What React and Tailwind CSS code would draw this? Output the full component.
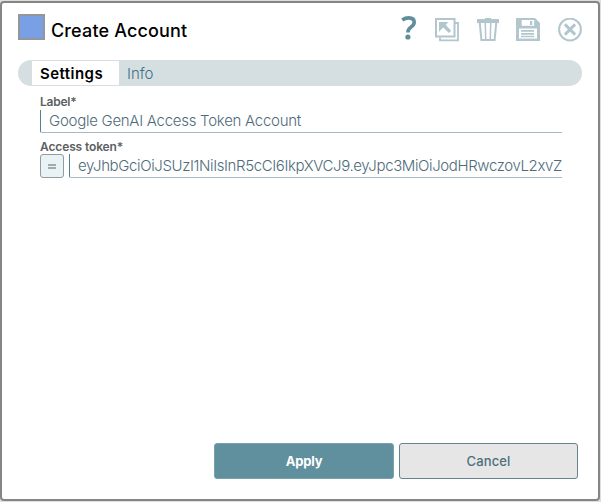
function HelpIcon() {
  return (
    <svg className="h-6 w-4" viewBox="0 0 16 24" fill="none">
      <path d="M1.2 4C3.5 2.4 5.3 1.9 7.8 1.9C11.2 1.9 13.2 3.5 13.2 6.2C13.2 8.4 12 9.7 9.8 11.2C7.7 12.7 6.9 13.5 6.9 16.5" stroke="#608e9c" strokeWidth="3.6" />
      <circle cx="6.9" cy="21" r="2.6" fill="#608e9c" />
    </svg>
  );
}

function PopOutIcon() {
  return (
    <svg className="size-6" viewBox="0 0 24 24" fill="none" stroke="#b2c6ce">
      <path d="M20 5H23V22.3H5V19.5" strokeWidth="1.8" />
      <rect x="1" y="1" width="18.5" height="17.5" strokeWidth="2" />
      <path d="M4 4H13.4L10.8 6.9L16.2 12.7L13.9 15L8.2 9.4L4 13.8Z" fill="#b2c6ce" stroke="none" />
    </svg>
  );
}

function TrashIcon() {
  return (
    <svg className="h-6 w-[22px]" viewBox="0 0 22 24" fill="none" stroke="#b2c6ce">
      <path d="M8 0H14V1H22V5H0V1H8Z" fill="#b2c6ce" stroke="none" />
      <path d="M2.8 5L4.4 22H17.6L19.2 5" strokeWidth="2" />
      <path d="M8.3 5L8.7 22M13.7 5L13.3 22" strokeWidth="1.5" />
    </svg>
  );
}

function SaveIcon() {
  return (
    <svg className="size-6" viewBox="0 0 24 24">
      <path d="M0 0H19L24 5V23H0Z" fill="#b2c6ce" />
      <path d="M5.7 2H18.2V7.8H5.7Z" fill="#fff" />
      <path d="M14 3H16.2V7H14Z" fill="#b2c6ce" />
      <path d="M3 10.5H21V20.6H3Z" fill="#fff" />
      <path d="M5 12H18V13.7H5ZM5 15H18V16.7H5ZM5 17.8H18V19.3H5Z" fill="#b2c6ce" />
    </svg>
  );
}

function CloseIcon() {
  return (
    <svg className="size-6" viewBox="0 0 24 24" fill="none" stroke="#b2c6ce">
      <circle cx="12" cy="11.5" r="10.9" strokeWidth="2" />
      <path d="M6.9 6.4L17.1 16.6M17.1 6.4L6.9 16.6" strokeWidth="2.9" />
    </svg>
  );
}

export default function App() {
  return (
    <div className="flex h-[502px] w-[601px] overflow-hidden bg-[#dedede] pt-px pr-px pb-px font-['Inter',sans-serif]">
      <div className="flex min-w-0 flex-1 flex-col rounded-[4px] border-2 border-[#858585] bg-white">
        <header className="flex h-[57px] items-start pl-4">
          <div className="mt-[11px] h-[26px] w-[27px] border-2 border-[#93979c] bg-[#799fe5]" />
          <h1 className="mt-4 ml-1.5 text-[18px] leading-6 font-medium tracking-[0.15px] whitespace-nowrap text-black">Create Account</h1>
          <div className="mt-[15px] mr-4 ml-auto flex items-start">
            <span className="-mt-0.5"><HelpIcon /></span>
            <span className="ml-[18px]"><PopOutIcon /></span>
            <span className="ml-[18px]"><TrashIcon /></span>
            <span className="ml-[17px]"><SaveIcon /></span>
            <span className="ml-[18px]"><CloseIcon /></span>
          </div>
        </header>
        <nav className="mr-4 ml-4 flex h-[26px] overflow-hidden rounded-full bg-[#d5dfe1] pl-[14px]">
          <button className="my-px w-[87px] bg-white pt-0.5 pl-2 text-left text-[15px] leading-[22px] font-semibold text-black">
            <span className="tracking-[0.45px]">Settings</span>
          </button>
          <button className="pt-0.5 pl-2 text-[15px] leading-6 font-light text-[#3d6f87]">Info</button>
        </nav>
        <main className="flex min-w-0 flex-1 flex-col pr-9 pl-[38px]">
          <label className="mt-2 h-[16px] text-[12px] leading-[15px] font-semibold tracking-[-0.25px] text-[#5c6063]">Label*</label>
          <div className="h-[23px] overflow-hidden rounded-bl-[2px] border-b border-l border-b-[#a5bac4] border-l-[#548091] pl-2 text-[15px] leading-[22px] font-light whitespace-nowrap text-[#4d6b7a]">
            <span className="tracking-[-0.27px]">Google GenAI Access Token Account</span>
          </div>
          <label className="mt-[6px] h-[15px] text-[12px] leading-[15px] font-semibold tracking-[-0.12px] text-[#5c6063]">Access token*</label>
          <div className="flex gap-[5px]">
            <div className="flex h-6 w-6 shrink-0 flex-col items-center justify-center gap-px rounded-[3px] border border-[#929b9e] bg-[#e9f2f5]">
              <span className="h-[2px] w-2 bg-[#a3aaad]" />
              <span className="h-[2px] w-2 bg-[#a3aaad]" />
            </div>
            <div className="h-[24px] min-w-0 flex-1 overflow-hidden rounded-bl-[2px] border-b border-l border-b-[#a5bac4] border-l-[#548091] pl-2 text-[15px] leading-[23px] font-light whitespace-nowrap text-[#4d6b7a]">
              <span className="tracking-[-0.38px]">eyJhbGciOiJSUzI1NiIsInR5cCI6IkpXVCJ9.eyJpc3MiOiJodHRwczovL2xvZ</span>
            </div>
          </div>
        </main>
        <footer className="mr-5 mb-5 flex justify-end gap-[5px]">
          <button className="h-9 w-[180px] rounded-[3px] border border-[#7aa2ad] bg-[#608f9d] pt-0.5 text-[13px] font-bold tracking-[-0.2px] text-white">Apply</button>
          <button className="h-9 w-[179px] rounded-[3px] border border-[#668390] bg-[#e6e6e6] pt-0.5 text-[13px] font-medium tracking-[0.1px] text-[#4d6f7f]">Cancel</button>
        </footer>
      </div>
    </div>
  );
}
